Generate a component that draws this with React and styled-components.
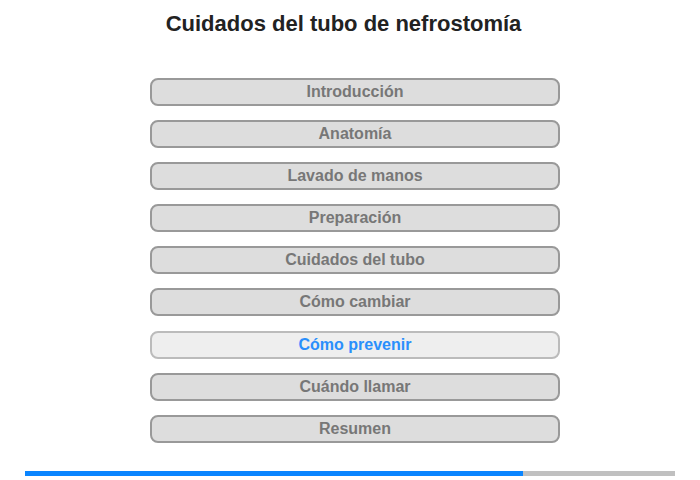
import React, { useState } from 'react';
import styled, { createGlobalStyle } from 'styled-components';

const GlobalStyle = createGlobalStyle`
  body {
    margin: 0;
    background: #fff;
    font-family: "Liberation Sans", Arial, sans-serif;
  }
`;

const Page = styled.div`
  width: 700px;
  height: 480px;
  display: flex;
  flex-direction: column;
  align-items: center;
`;

const Title = styled.h1`
  margin: 11px 0 0;
  padding-right: 13px;
  font-size: 22px;
  line-height: 25px;
  font-weight: bold;
  color: #222;
`;

const Menu = styled.nav`
  display: flex;
  flex-direction: column;
  gap: 14.1px;
  margin-top: 42px;
  padding-left: 10px;
`;

const MenuButton = styled.button`
  box-sizing: border-box;
  width: 410px;
  height: 28px;
  padding: 0;
  border: 2px solid ${(props) => (props.active ? '#bbb' : '#999')};
  border-radius: 8px;
  background: ${(props) => (props.active ? '#eee' : '#ddd')};
  color: ${(props) => (props.active ? '#2a8ffc' : '#777')};
  font-family: "Liberation Sans", Arial, sans-serif;
  font-size: 16px;
  font-weight: bold;
  cursor: pointer;
`;

const Progress = styled.div`
  width: 650px;
  height: 5px;
  margin-top: 28px;
  background: #c0c0c0;
  display: flex;
`;

const ProgressFill = styled.div`
  height: 100%;
  background: #0a85ff;
`;

const secciones = [
  'Introducción',
  'Anatomía',
  'Lavado de manos',
  'Preparación',
  'Cuidados del tubo',
  'Cómo cambiar',
  'Cómo prevenir',
  'Cuándo llamar',
  'Resumen',
];

const App = () => {
  const [actual, setActual] = useState(6); // sección seleccionada

  return (
    <Page>
      <GlobalStyle />
      <Title>Cuidados del tubo de nefrostomía</Title>
      <Menu>
        {secciones.map((nombre, i) => (
          <MenuButton key={nombre} active={i === actual} onClick={() => setActual(i)}>
            {nombre}
          </MenuButton>
        ))}
      </Menu>
      <Progress>
        <ProgressFill style={{ width: '76.6%' }} />
      </Progress>
    </Page>
  );
};

export default App;
